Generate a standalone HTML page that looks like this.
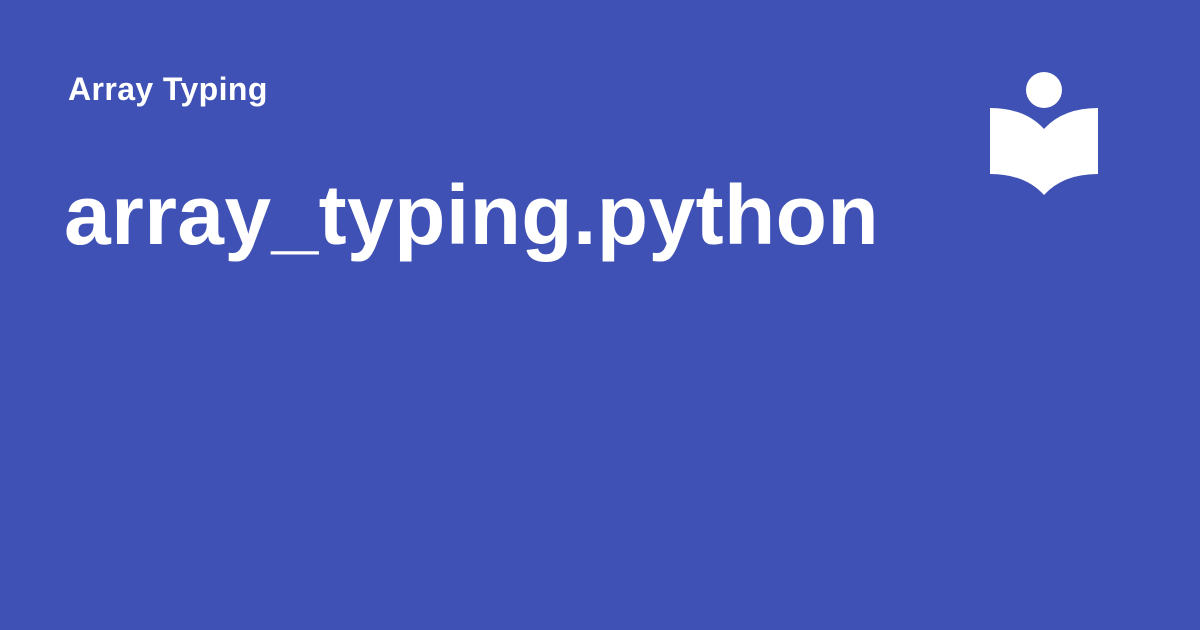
<!DOCTYPE html>
<html><head><style>
body{margin:0;width:1200px;height:630px;background:#3f51b5;overflow:hidden;position:relative;font-family:"Liberation Sans",sans-serif;color:#fff}
.a{position:absolute;left:68px;top:69px;font-size:32px;font-weight:bold;line-height:40px;letter-spacing:0.4px}
.b{position:absolute;left:64px;top:165px;font-size:84px;font-weight:bold;line-height:100px;letter-spacing:0.4px}
svg{position:absolute;left:0;top:0}
</style></head><body>
<div class="a">Array Typing</div>
<div class="b">array_typing.python</div>
<svg width="1200" height="630"><circle cx="1044" cy="90" r="18" fill="#fff"/>
<path d="M990 108 Q1025 108 1044 129 Q1063 108 1098 108 L1098 174 Q1063 174 1044 195 Q1025 174 990 174 Z" fill="#fff"/></svg>
</body></html>
